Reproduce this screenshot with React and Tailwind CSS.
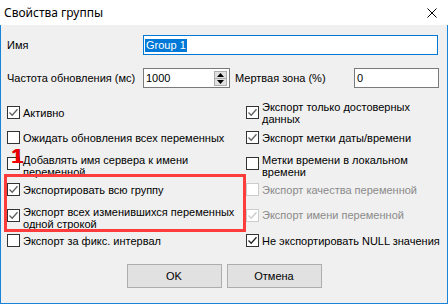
import clsx from "clsx";

function CheckBox({ checked, disabled, strong }) {
  return (
    <span
      className={clsx(
        "w-[13px] h-[13px] shrink-0 border bg-white flex items-center justify-center",
        disabled ? "border-[#cccccc]" : "border-[#333333]"
      )}
    >
      {checked && (
        <svg width="11" height="11" viewBox="0 0 11 11">
          <path
            d="M1.5 5.5 L4.2 8.2 L9.5 2.2"
            fill="none"
            stroke={disabled ? "#cccccc" : strong ? "#222222" : "#5f5f5f"}
            strokeWidth="1.3"
          />
        </svg>
      )}
    </span>
  );
}

function Option({ label, checked, disabled, strong, nudge }) {
  return (
    <div className="flex items-center gap-[3px]">
      <CheckBox checked={checked} disabled={disabled} strong={strong} />
      <span
        className={clsx(
          "leading-[12px] whitespace-pre-line",
          nudge && "pt-[5px]",
          disabled ? "text-[#8a8a8a]" : "text-black"
        )}
      >
        {label}
      </span>
    </div>
  );
}

function Spinner() {
  return (
    <div className="flex flex-col w-[13px] h-[15px] mr-[2px]">
      <div className="flex-1 bg-[#e1e1e1] border border-[#adadad] flex items-center justify-center">
        <svg width="7" height="4" viewBox="0 0 7 4">
          <path d="M0 4 L3.5 0 L7 4 Z" fill="#000" />
        </svg>
      </div>
      <div className="flex-1 bg-[#e1e1e1] border border-t-0 border-[#adadad] flex items-center justify-center">
        <svg width="7" height="4" viewBox="0 0 7 4">
          <path d="M0 0 L3.5 4 L7 0 Z" fill="#000" />
        </svg>
      </div>
    </div>
  );
}

export default function App() {
  const left = [
    { label: "Активно", checked: true },
    { label: "Ожидать обновления всех переменных" },
    { label: "Добавлять имя сервера к имени\nпеременной", nudge: true },
    { label: "Экспортировать всю группу", checked: true },
    { label: "Экспорт всех изменившихся переменных\nодной строкой", checked: true, nudge: true },
    { label: "Экспорт за фикс. интервал" },
  ];
  const right = [
    { label: "Экспорт только достоверных\nданных", checked: true },
    { label: "Экспорт метки даты/времени", checked: true },
    { label: "Метки времени в локальном\nвремени", nudge: true },
    { label: "Экспорт качества переменной", disabled: true },
    { label: "Экспорт имени переменной", checked: true, disabled: true },
    { label: "Не экспортировать NULL значения", checked: true, strong: true },
  ];

  return (
    <div className="relative w-[448px] h-[304px] bg-[#f0f0f0] flex flex-col font-['Liberation_Sans',Arial,sans-serif] text-[11px] text-black overflow-hidden">
      {/* Title bar */}
      <div className="h-[25px] bg-white flex items-center justify-between pl-[4px] pr-[11px] shrink-0">
        <span className="font-['Noto_Sans',sans-serif] text-[12px] text-black">
          Свойства группы
        </span>
        <svg width="10" height="10" viewBox="0 0 10 10">
          <path d="M0.5 0.5 L9.5 9.5 M9.5 0.5 L0.5 9.5" stroke="#000" strokeWidth="1" />
        </svg>
      </div>

      {/* Body */}
      <div className="flex-1 border-x border-b border-[#1883d7] pl-[6px] flex flex-col">
        <div className="flex items-center h-[20px] mt-[10px]">
          <span className="w-[136px]">Имя</span>
          <div className="w-[295px] h-[20px] border border-[#0078d7] bg-white flex items-center pl-[1px]">
            <span className="bg-[#0078d7] text-white px-[1px] leading-[13px]">Group 1</span>
          </div>
        </div>

        <div className="flex items-center h-[20px] mt-[13px]">
          <span className="w-[136px]">Частота обновления (мс)</span>
          <div className="w-[87px] h-[20px] border border-[#7a7a7a] bg-white flex items-center justify-between pl-[2px]">
            <span>1000</span>
            <Spinner />
          </div>
          <span className="w-[119px] ml-[5px]">Мертвая зона (%)</span>
          <div className="w-[85px] h-[20px] border border-[#7a7a7a] bg-white flex items-center pl-[2px]">
            <span>0</span>
          </div>
        </div>

        <div className="grid grid-cols-[239px_1fr] grid-rows-[25px_25px_27px_25px_26px_25px] grid-flow-col mt-[12px]">
          {left.map((o, i) => (
            <Option key={"l" + i} {...o} />
          ))}
          {right.map((o, i) => (
            <Option key={"r" + i} {...o} />
          ))}
        </div>

        <div className="flex justify-center gap-[5px] mt-[11px] pr-[6px]">
          <button className="w-[95px] h-[24px] bg-[#e1e1e1] border border-[#adadad]">OK</button>
          <button className="w-[95px] h-[24px] bg-[#e1e1e1] border border-[#adadad]">Отмена</button>
        </div>
      </div>

      {/* Annotation */}
      <div className="absolute left-[4px] top-[174px] w-[242px] h-[58px] border-[3px] border-[#ff3c3c] pointer-events-none" />
      <span className="absolute left-[11px] top-[145px] text-[21px] leading-[21px] font-bold text-[#ee0000] [text-shadow:1px_0_#a00000] pointer-events-none">
        1
      </span>
    </div>
  );
}
